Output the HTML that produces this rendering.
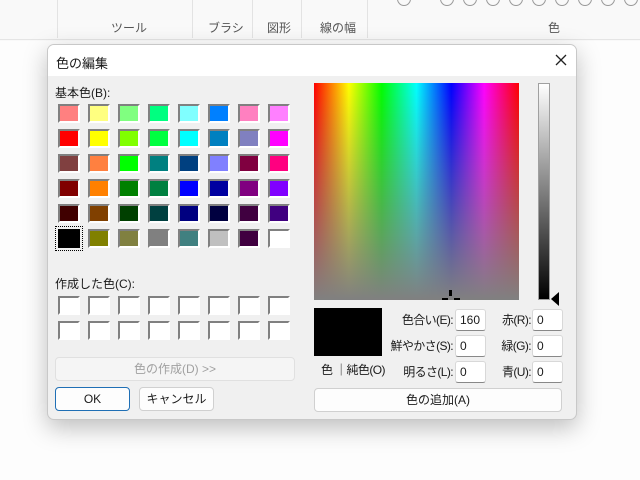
<!DOCTYPE html>
<html><head><meta charset="utf-8"><style>
*{margin:0;padding:0;box-sizing:border-box}
body{width:640px;height:480px;overflow:hidden;background:#f9f9f9;font-family:"Liberation Sans","Noto Sans CJK JP",sans-serif;font-size:12px;color:#1a1a1a;position:relative}
.tb{position:absolute;left:0;top:0;width:640px;height:40px;background:#f9f9f9;border-bottom:1px solid #e5e5e5}
.sep{position:absolute;top:0;height:38px;border-left:1px solid #e3e3e3}
.tl{position:absolute;top:19px;font-size:12px;color:#555}
.circ{position:absolute;top:-8px;width:14px;height:14px;border:1px solid #999;border-radius:50%}
.a{position:absolute}
.dlg{position:absolute;left:47px;top:44px;width:530px;height:376px;background:#f0f0f0;border:1px solid #c8c8c8;border-radius:7px;box-shadow:0 8px 24px rgba(0,0,0,.25);overflow:hidden}
.title{position:absolute;left:0;top:0;width:100%;height:31px;background:#fff}
.sw{position:absolute;width:22px;height:19px;border:2px solid;border-color:#808080 #fff #fff #808080}
.cs{position:absolute;width:22px;height:19px;border:2px solid;border-color:#808080 #fff #fff #808080;background:#fff}
.btn{position:absolute;background:#fdfdfd;border:1px solid #d0d0d0;border-radius:4px;text-align:center;line-height:22px}
.ed{position:absolute;width:31px;height:22px;background:#fff;border:1px solid #d8d8d8;border-bottom:1px solid #888;border-radius:3px;padding-left:4px;line-height:20px}
.lb{position:absolute;text-align:right;line-height:22px;letter-spacing:-0.6px}
</style></head><body>
<div class="tb">
<div class="sep" style="left:57px"></div><div class="sep" style="left:192px"></div><div class="sep" style="left:252px"></div><div class="sep" style="left:301px"></div><div class="sep" style="left:367px"></div>
<div class="tl" style="left:111px">ツール</div><div class="tl" style="left:208px">ブラシ</div><div class="tl" style="left:267px">図形</div><div class="tl" style="left:320px">線の幅</div><div class="tl" style="left:548px">色</div>
<div class="circ" style="left:397px"></div>
<div class="circ" style="left:440px"></div><div class="circ" style="left:463px"></div><div class="circ" style="left:486px"></div><div class="circ" style="left:509px"></div><div class="circ" style="left:532px"></div><div class="circ" style="left:555px"></div><div class="circ" style="left:578px"></div><div class="circ" style="left:601px"></div><div class="circ" style="left:624px"></div>
</div>
<div class="a" style="left:0;top:41px;width:640px;height:439px;background:#fdfdfd"></div>
<div class="dlg">
<div class="title"></div>
<div class="a" style="left:8px;top:8px;font-size:13px">色の編集</div>
<svg class="a" style="left:507px;top:9px" width="12" height="12"><path d="M1 1L11 11M11 1L1 11" stroke="#222" stroke-width="1.3"/></svg>
<div class="a" style="left:7px;top:39px">基本色(B):</div>
<div class="a" style="left:7px;top:230px">作成した色(C):</div>
</div>
<div class="a" style="left:314px;top:83px;width:205px;height:217px;background:linear-gradient(to right,#f00,#ff0 17%,#0f0 33%,#0ff 50%,#00f 67%,#f0f 83%,#f00)"></div>
<div class="a" style="left:314px;top:83px;width:205px;height:217px;background:linear-gradient(to bottom,rgba(128,128,128,0),#808080)"></div>
<div class="a" style="left:449px;top:290px;width:3px;height:6px;background:#000"></div>
<div class="a" style="left:442px;top:298px;width:6px;height:2px;background:#000"></div><div class="a" style="left:454px;top:298px;width:6px;height:2px;background:#000"></div>
<div class="a" style="left:538px;top:83px;width:12px;height:217px;background:linear-gradient(#fff,#000);border:1px solid #a0a0a0"></div>
<svg class="a" style="left:551px;top:292px" width="8" height="14"><path d="M8 0L0 7L8 14Z" fill="#000"/></svg>
<div class="a" style="left:314px;top:308px;width:68px;height:48px;background:#000"></div>
<div class="a" style="left:321px;top:361px;letter-spacing:-0.6px">色 ｜純色(O)</div>
<div class="lb" style="left:380px;top:309px;width:73px">色合い(E):</div>
<div class="lb" style="left:380px;top:335px;width:73px">鮮やかさ(S):</div>
<div class="lb" style="left:380px;top:361px;width:73px">明るさ(L):</div>
<div class="lb" style="left:490px;top:309px;width:41px">赤(R):</div>
<div class="lb" style="left:490px;top:335px;width:41px">緑(G):</div>
<div class="lb" style="left:490px;top:361px;width:41px">青(U):</div>
<div class="ed" style="left:455px;top:309px">160</div><div class="ed" style="left:455px;top:335px">0</div><div class="ed" style="left:455px;top:361px">0</div>
<div class="ed" style="left:532px;top:309px">0</div><div class="ed" style="left:532px;top:335px">0</div><div class="ed" style="left:532px;top:361px">0</div>
<div class="btn" style="left:314px;top:388px;width:248px;height:24px">色の追加(A)</div>
<div class="btn" style="left:55px;top:357px;width:240px;height:24px;background:#f5f5f5;color:#a0a0a0;border-color:#e0e0e0">色の作成(D) &gt;&gt;</div>
<div class="btn" style="left:55px;top:387px;width:75px;height:24px;border:1px solid #1f6fb5">OK</div>
<div class="btn" style="left:139px;top:387px;width:75px;height:24px">キャンセル</div>
<div class="sw" style="left:58px;top:104px;background:#ff8080"></div><div class="sw" style="left:88px;top:104px;background:#ffff80"></div><div class="sw" style="left:118px;top:104px;background:#80ff80"></div><div class="sw" style="left:148px;top:104px;background:#00ff80"></div><div class="sw" style="left:178px;top:104px;background:#80ffff"></div><div class="sw" style="left:208px;top:104px;background:#0080ff"></div><div class="sw" style="left:238px;top:104px;background:#ff80c0"></div><div class="sw" style="left:268px;top:104px;background:#ff80ff"></div>
<div class="sw" style="left:58px;top:129px;background:#ff0000"></div><div class="sw" style="left:88px;top:129px;background:#ffff00"></div><div class="sw" style="left:118px;top:129px;background:#80ff00"></div><div class="sw" style="left:148px;top:129px;background:#00ff40"></div><div class="sw" style="left:178px;top:129px;background:#00ffff"></div><div class="sw" style="left:208px;top:129px;background:#0080c0"></div><div class="sw" style="left:238px;top:129px;background:#8080c0"></div><div class="sw" style="left:268px;top:129px;background:#ff00ff"></div>
<div class="sw" style="left:58px;top:154px;background:#804040"></div><div class="sw" style="left:88px;top:154px;background:#ff8040"></div><div class="sw" style="left:118px;top:154px;background:#00ff00"></div><div class="sw" style="left:148px;top:154px;background:#008080"></div><div class="sw" style="left:178px;top:154px;background:#004080"></div><div class="sw" style="left:208px;top:154px;background:#8080ff"></div><div class="sw" style="left:238px;top:154px;background:#800040"></div><div class="sw" style="left:268px;top:154px;background:#ff0080"></div>
<div class="sw" style="left:58px;top:179px;background:#800000"></div><div class="sw" style="left:88px;top:179px;background:#ff8000"></div><div class="sw" style="left:118px;top:179px;background:#008000"></div><div class="sw" style="left:148px;top:179px;background:#008040"></div><div class="sw" style="left:178px;top:179px;background:#0000ff"></div><div class="sw" style="left:208px;top:179px;background:#0000a0"></div><div class="sw" style="left:238px;top:179px;background:#800080"></div><div class="sw" style="left:268px;top:179px;background:#8000ff"></div>
<div class="sw" style="left:58px;top:204px;background:#400000"></div><div class="sw" style="left:88px;top:204px;background:#804000"></div><div class="sw" style="left:118px;top:204px;background:#004000"></div><div class="sw" style="left:148px;top:204px;background:#004040"></div><div class="sw" style="left:178px;top:204px;background:#000080"></div><div class="sw" style="left:208px;top:204px;background:#000040"></div><div class="sw" style="left:238px;top:204px;background:#400040"></div><div class="sw" style="left:268px;top:204px;background:#400080"></div>
<div class="a" style="left:55px;top:226px;width:28px;height:25px;border:1px dotted #000"></div>
<div class="sw" style="left:58px;top:229px;background:#000;border-color:#000"></div><div class="sw" style="left:88px;top:229px;background:#808000"></div><div class="sw" style="left:118px;top:229px;background:#808040"></div><div class="sw" style="left:148px;top:229px;background:#808080"></div><div class="sw" style="left:178px;top:229px;background:#408080"></div><div class="sw" style="left:208px;top:229px;background:#c0c0c0"></div><div class="sw" style="left:238px;top:229px;background:#400040"></div><div class="sw" style="left:268px;top:229px;background:#ffffff"></div>
<div class="cs" style="left:58px;top:296px"></div><div class="cs" style="left:88px;top:296px"></div><div class="cs" style="left:118px;top:296px"></div><div class="cs" style="left:148px;top:296px"></div><div class="cs" style="left:178px;top:296px"></div><div class="cs" style="left:208px;top:296px"></div><div class="cs" style="left:238px;top:296px"></div><div class="cs" style="left:268px;top:296px"></div>
<div class="cs" style="left:58px;top:321px"></div><div class="cs" style="left:88px;top:321px"></div><div class="cs" style="left:118px;top:321px"></div><div class="cs" style="left:148px;top:321px"></div><div class="cs" style="left:178px;top:321px"></div><div class="cs" style="left:208px;top:321px"></div><div class="cs" style="left:238px;top:321px"></div><div class="cs" style="left:268px;top:321px"></div>
</body></html>
